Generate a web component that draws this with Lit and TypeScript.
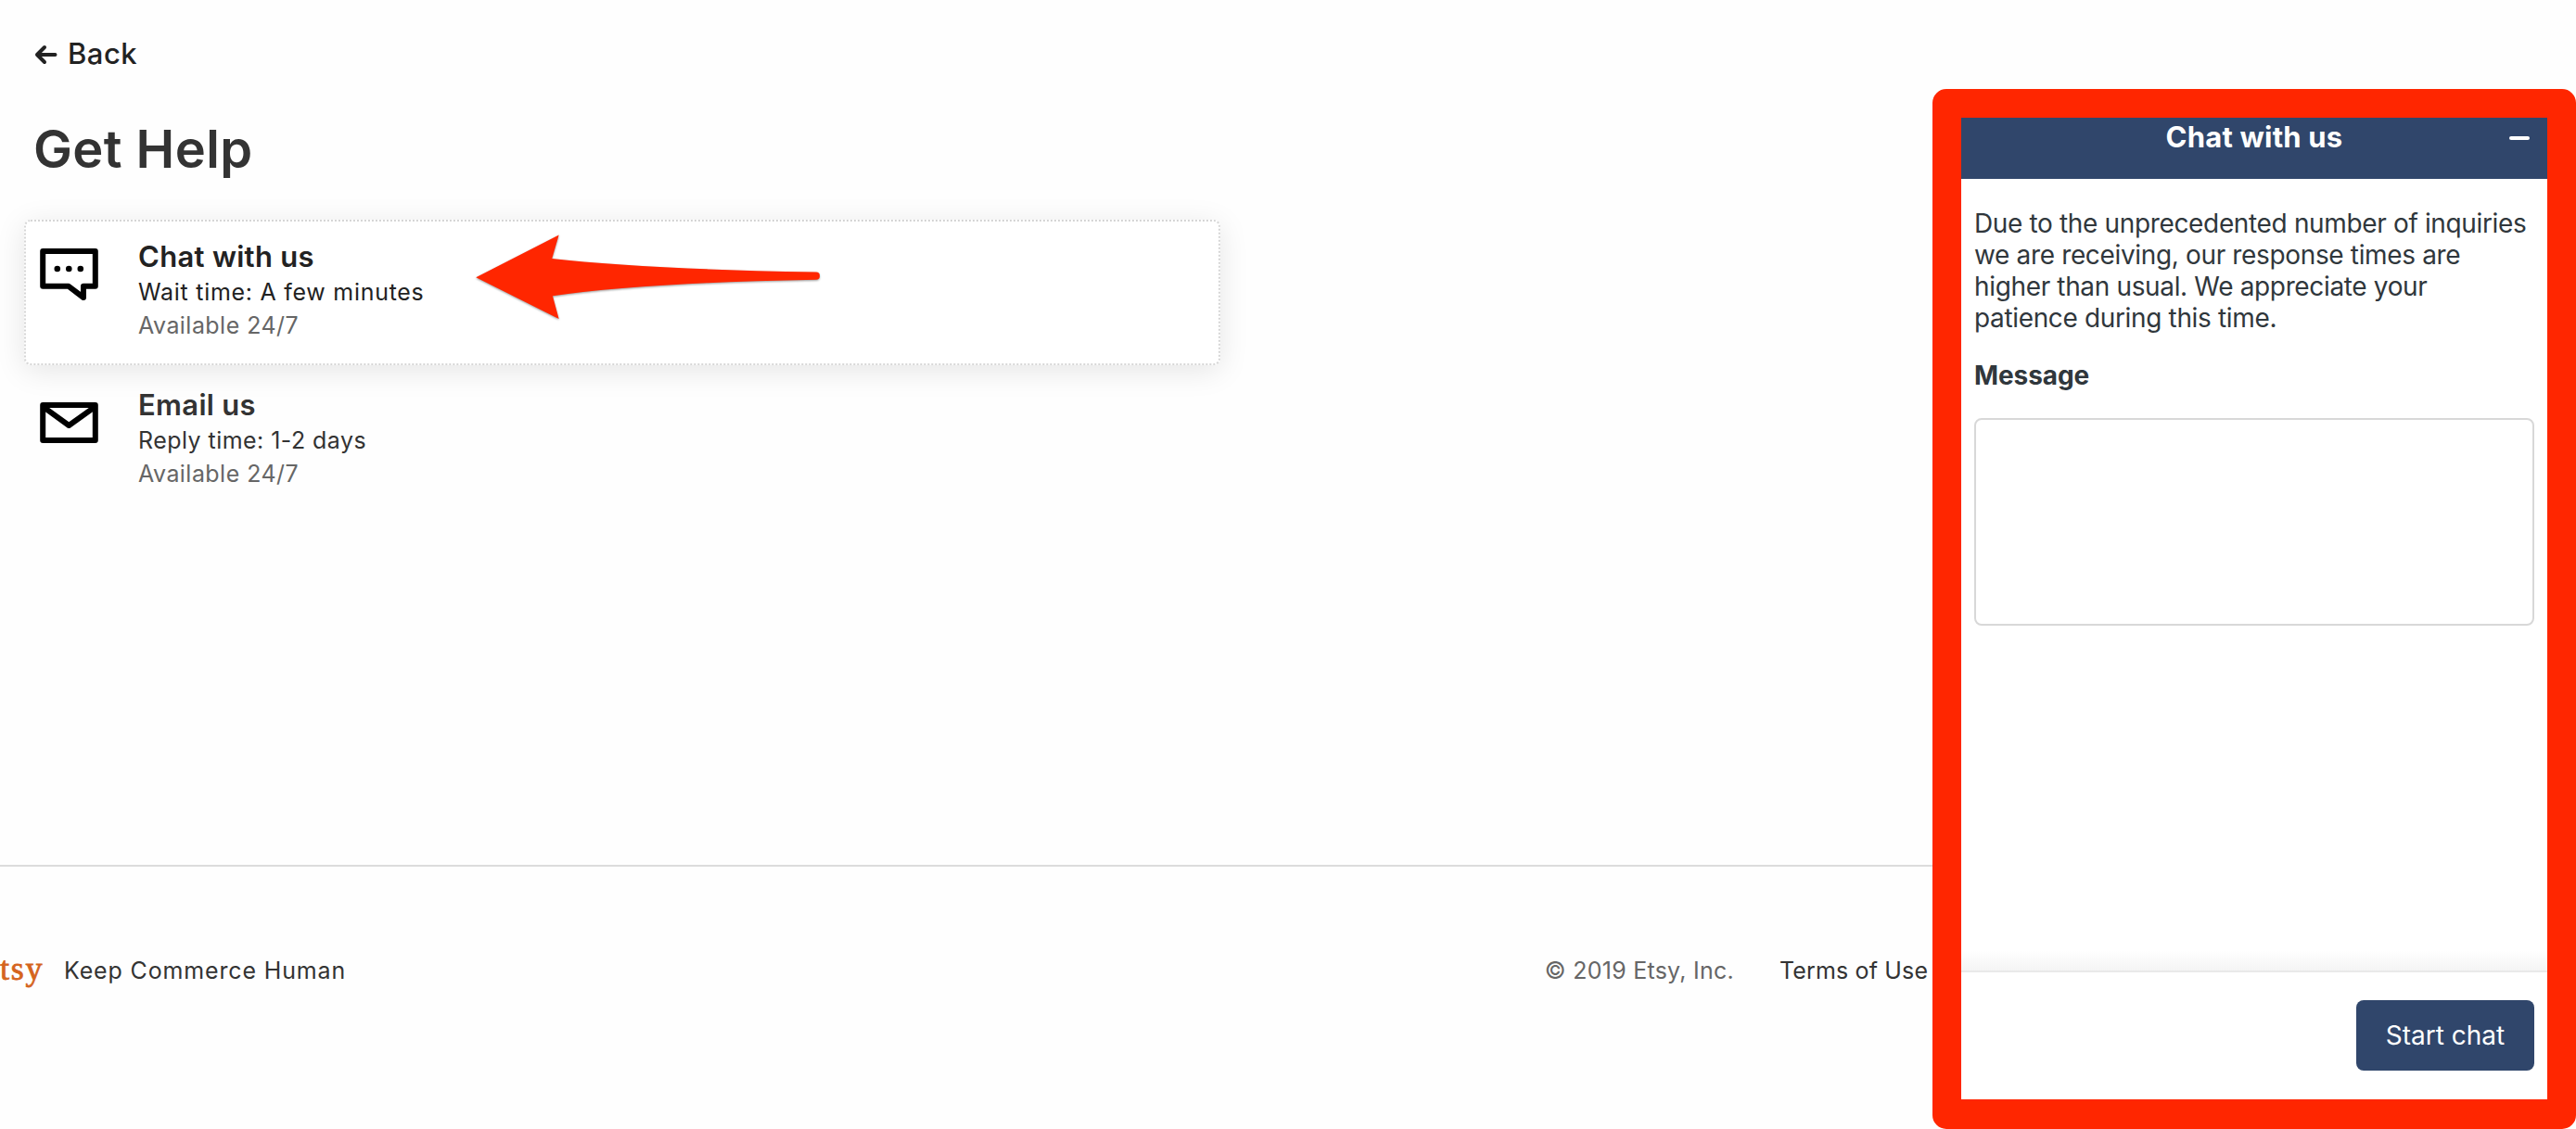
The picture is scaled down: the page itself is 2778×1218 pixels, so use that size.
import { css, html, LitElement, svg } from "lit";
import { customElement, property } from "lit/decorators.js";

type ContactKind = "chat" | "email";

const icons = {
  chat: svg`
    <path d="M3.2 12H59.8V49.8H47V62L31 49.8H3.2Z" />
    <g class="dots">
      <circle cx="18.8" cy="31" r="3.3" />
      <circle cx="31.3" cy="31" r="3.3" />
      <circle cx="43.8" cy="31" r="3.3" />
    </g>
  `,
  email: svg`
    <path d="M3.2 18H59.8V56H3.2Z" />
    <path d="M3.2 19.6L31.3 40L59.8 19.6" />
  `,
};

@customElement("help-option")
export class HelpOption extends LitElement {
  @property() kind: ContactKind = "chat";
  @property() name = "";
  @property() time = "";
  @property() hours = "";

  static styles = css`
    :host {
      display: flex;
      box-sizing: border-box;
      width: 1290px;
      height: 157px;
      padding: 20px 15px 0;
      border: 2px dotted transparent;
      border-radius: 7px;
    }

    :host([active]) {
      border-color: #d6d6d6;
      background: #fff;
      box-shadow: 0 6px 32px rgba(0, 0, 0, 0.1);
    }

    svg {
      width: 64px;
      height: 70px;
      margin-right: 42px;
      fill: none;
      stroke: #000;
      stroke-width: 6;
      stroke-linejoin: round;
    }

    .dots {
      fill: #000;
      stroke: none;
    }

    .name {
      margin-top: -1px;
      font-size: 31px;
      font-weight: 600;
      line-height: 38px;
      letter-spacing: 0.3px;
      color: #333;
    }

    :host([active]) .name {
      color: #222;
    }

    .time,
    .hours {
      font-size: 25px;
      line-height: 36px;
      letter-spacing: 0.45px;
      color: #333;
    }

    .time {
      margin-top: 1px;
    }

    :host([active]) .time {
      letter-spacing: 0.72px;
      color: #222;
    }

    .hours {
      color: #666;
    }
  `;

  render() {
    return html`
      <svg viewBox="0 0 64 70">${icons[this.kind]}</svg>
      <div>
        <div class="name">${this.name}</div>
        <div class="time">${this.time}</div>
        <div class="hours">${this.hours}</div>
      </div>
    `;
  }
}

@customElement("chat-widget")
export class ChatWidget extends LitElement {
  static styles = css`
    :host {
      display: flex;
      flex-direction: column;
      box-sizing: border-box;
      border: 31px solid #ff2600;
      border-bottom-width: 32px;
      border-radius: 15px;
      background: #fff;
      color: #30373c;
      font-size: 28px;
      line-height: 34px;
    }

    header {
      display: grid;
      grid-template-columns: 41px 1fr 41px;
      align-items: start;
      height: 64px;
      padding-top: 2px;
      background: #30466b;
      color: #fff;
    }

    h2 {
      grid-column: 2;
      margin: 0;
      font-size: 31px;
      font-weight: 700;
      line-height: 38px;
      letter-spacing: 0.2px;
      text-align: center;
    }

    .minimize {
      width: 22px;
      height: 4px;
      margin-top: 18px;
      border-radius: 2px;
      background: #fff;
    }

    .body {
      flex: 1;
      padding: 31px 14px 0;
    }

    p {
      margin: 0 -10px 28px 0;
      letter-spacing: -0.35px;
    }

    label {
      display: block;
      margin: 0 0 29px;
      font-weight: 700;
      letter-spacing: -0.1px;
    }

    textarea {
      display: block;
      box-sizing: border-box;
      width: 604px;
      height: 224px;
      border: 2px solid #d8d8d8;
      border-radius: 8px;
      resize: none;
    }

    .fade {
      height: 22px;
      background: linear-gradient(#fff, #f4f4f4);
    }

    footer {
      display: flex;
      justify-content: flex-end;
      box-sizing: border-box;
      height: 139px;
      padding: 30px 14px 0;
      border-top: 2px solid #e9e9e9;
    }

    button {
      width: 192px;
      height: 76px;
      padding: 0;
      border: 0;
      border-radius: 8px;
      background: #30466b;
      color: #fff;
      font: inherit;
    }
  `;

  render() {
    return html`
      <header>
        <h2>Chat with us</h2>
        <div class="minimize"></div>
      </header>
      <div class="body">
        <p>
          Due to the unprecedented number of inquiries<br />
          we are receiving, our response times are<br />
          higher than usual. We appreciate your<br />
          patience during this time.
        </p>
        <label for="message">Message</label>
        <textarea id="message"></textarea>
      </div>
      <div class="fade"></div>
      <footer><button>Start chat</button></footer>
    `;
  }
}

@customElement("app-root")
export class AppRoot extends LitElement {
  static styles = css`
    :host {
      display: block;
      position: relative;
      height: 1218px;
      overflow: hidden;
      background: #fefefe;
      color: #333;
      font-family: Inter, "Liberation Sans", sans-serif;
    }

    main {
      box-sizing: border-box;
      height: 933px;
      padding: 38px 26px 0;
    }

    .back {
      display: flex;
      align-items: center;
      gap: 10px;
      padding-left: 11px;
      color: #222;
      font-size: 31px;
      font-weight: 500;
      line-height: 40px;
      letter-spacing: 0.5px;
    }

    .back svg {
      width: 26px;
      height: 22px;
      margin-top: 2px;
      fill: none;
      stroke: #222;
      stroke-width: 4;
      stroke-linecap: round;
      stroke-linejoin: round;
    }

    h1 {
      margin: 50px 0 43px 10px;
      font-size: 56px;
      font-weight: 600;
      line-height: 66px;
      letter-spacing: 0.4px;
    }

    .options {
      display: flex;
      flex-direction: column;
      gap: 3px;
    }

    .pointer {
      position: absolute;
      top: 250px;
      left: 510px;
      width: 380px;
      height: 100px;
      fill: #ff2600;
      filter: drop-shadow(0 1px 1px rgba(0, 0, 0, 0.4));
    }

    .footer {
      display: flex;
      padding-top: 94px;
      border-top: 2px solid #dcdcdc;
      font-size: 25px;
      line-height: 36px;
    }

    .logo {
      width: 48px;
      margin-right: 21px;
      color: #d5641c;
      font-family: "Liberation Serif", serif;
      font-size: 36px;
      letter-spacing: 1.8px;
      line-height: 32px;
      -webkit-text-stroke: 0.8px #d5641c;
    }

    .tagline {
      flex: 1;
      letter-spacing: 0.85px;
    }

    .copyright {
      margin-right: 49px;
      color: #666;
      letter-spacing: 0.25px;
    }

    .terms {
      width: 859px;
      letter-spacing: 0.15px;
    }

    chat-widget {
      position: absolute;
      top: 96px;
      right: 0;
      width: 694px;
      height: 1122px;
    }
  `;

  render() {
    return html`
      <main>
        <div class="back">
          <svg viewBox="0 0 26 22"><path d="M22.5 11H3M11 3L3 11L11 19" /></svg>
          Back
        </div>
        <h1>Get Help</h1>
        <div class="options">
          <help-option
            active
            kind="chat"
            name="Chat with us"
            time="Wait time: A few minutes"
            hours="Available 24/7"
          ></help-option>
          <help-option
            kind="email"
            name="Email us"
            time="Reply time: 1-2 days"
            hours="Available 24/7"
          ></help-option>
        </div>
      </main>
      <svg class="pointer" viewBox="510 250 380 100">
        <path
          d="M513.3 299.3L602.7 253.5L595.3 279Q690 290 880 293.6A4 4 0 0 1 880 301.7Q690 305 596 319.3L602.7 344Z"
        />
      </svg>
      <div class="footer">
        <div class="logo">tsy</div>
        <div class="tagline">Keep Commerce Human</div>
        <div class="copyright">© 2019 Etsy, Inc.</div>
        <div class="terms">Terms of Use</div>
      </div>
      <chat-widget></chat-widget>
    `;
  }
}
